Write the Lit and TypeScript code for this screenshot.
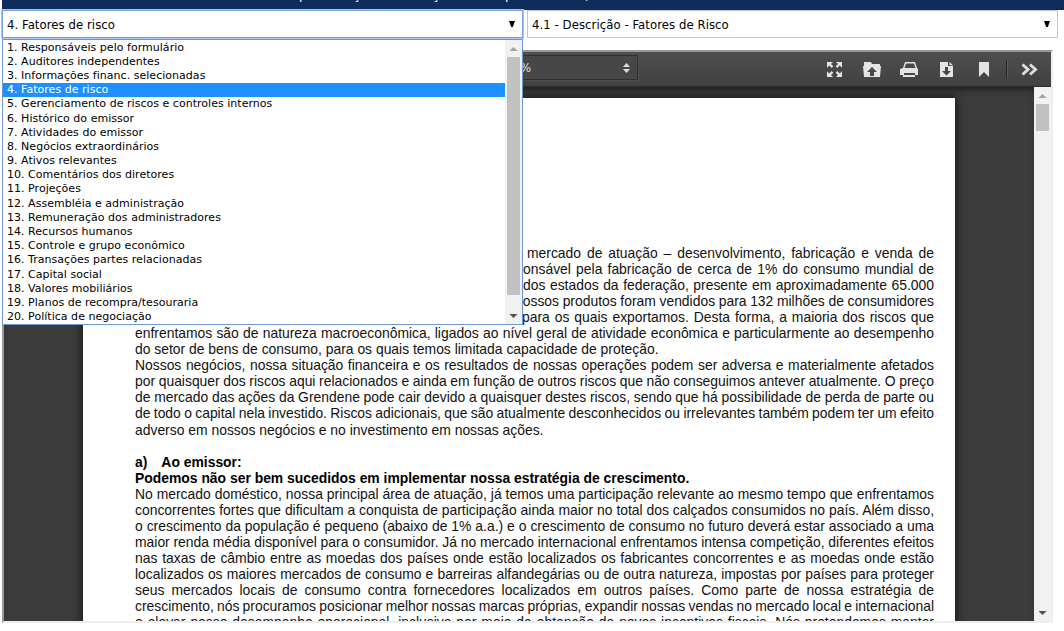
import { LitElement, html, css } from "lit";
import { customElement } from "lit/decorators.js";

const OPTIONS = [
  "1. Responsáveis pelo formulário", "2. Auditores independentes", "3. Informações financ. selecionadas",
  "4. Fatores de risco", "5. Gerenciamento de riscos e controles internos", "6. Histórico do emissor",
  "7. Atividades do emissor", "8. Negócios extraordinários", "9. Ativos relevantes",
  "10. Comentários dos diretores", "11. Projeções", "12. Assembléia e administração",
  "13. Remuneração dos administradores", "14. Recursos humanos", "15. Controle e grupo econômico",
  "16. Transações partes relacionadas", "17. Capital social", "18. Valores mobiliários",
  "19. Planos de recompra/tesouraria", "20. Política de negociação",
];

type Line = { t: string; indent?: number; kind?: string };
const LINES: Line[] = [
  { t: "mercado de atuação – desenvolvimento, fabricação e venda de", indent: 392 },
  { t: "responsável pela fabricação de cerca de 1% do consumo mundial de", indent: 361 },
  { t: "dos estados da federação, presente em aproximadamente 65.000", indent: 388 },
  { t: "nossos produtos foram vendidos para 132 milhões de consumidores", indent: 380 },
  { t: "para os quais exportamos. Desta forma, a maioria dos riscos que", indent: 387 },
  { t: "enfrentamos são de natureza macroeconômica, ligados ao nível geral de atividade econômica e particularmente ao desempenho" },
  { t: "do setor de bens de consumo, para os quais temos limitada capacidade de proteção.", kind: "last" },
  { t: "Nossos negócios, nossa situação financeira e os resultados de nossas operações podem ser adversa e materialmente afetados" },
  { t: "por quaisquer dos riscos aqui relacionados e ainda em função de outros riscos que não conseguimos antever atualmente. O preço" },
  { t: "de mercado das ações da Grendene pode cair devido a quaisquer destes riscos, sendo que há possibilidade de perda de parte ou" },
  { t: "de todo o capital nela investido. Riscos adicionais, que são atualmente desconhecidos ou irrelevantes também podem ter um efeito" },
  { t: "adverso em nossos negócios e no investimento em nossas ações.", kind: "last" },
  { t: "", kind: "last" },
  { t: "Ao emissor:", kind: "head" },
  { t: "Podemos não ser bem sucedidos em implementar nossa estratégia de crescimento.", kind: "last bold" },
  { t: "No mercado doméstico, nossa principal área de atuação, já temos uma participação relevante ao mesmo tempo que enfrentamos" },
  { t: "concorrentes fortes que dificultam a conquista de participação ainda maior no total dos calçados consumidos no país. Além disso," },
  { t: "o crescimento da população é pequeno (abaixo de 1% a.a.) e o crescimento de consumo no futuro deverá estar associado a uma" },
  { t: "maior renda média disponível para o consumidor. Já no mercado internacional enfrentamos intensa competição, diferentes efeitos" },
  { t: "nas taxas de câmbio entre as moedas dos países onde estão localizados os fabricantes concorrentes e as moedas onde estão" },
  { t: "localizados os maiores mercados de consumo e barreiras alfandegárias ou de outra natureza, impostas por países para proteger" },
  { t: "seus mercados locais de consumo contra fornecedores localizados em outros países. Como parte de nossa estratégia de" },
  { t: "crescimento, nós procuramos posicionar melhor nossas marcas próprias, expandir nossas vendas no mercado local e internacional" },
  { t: "e elevar nosso desempenho operacional, inclusive por meio da obtenção de novos incentivos fiscais. Nós pretendemos manter" },
];

const TEXT_WIDTH = 799;

@customElement("app-root")
export class AppRoot extends LitElement {
  static styles = css`
    * { box-sizing: border-box; }
    :host { display: block; position: relative; width: 1064px; height: 631px; overflow: hidden; background: #fff; color: #000; font-family: "DejaVu Sans", sans-serif; }
    .banner { height: 10px; margin-left: 2px; background: #0e2c5c; overflow: hidden; color: #fff; font: 14px/16px "DejaVu Sans Condensed", "DejaVu Sans", sans-serif; }
    .title { display: grid; grid-template-columns: 54px 79px 73px 80px 20px; margin: -14px 0 0 297px; height: 16px; }
    .selects { display: flex; gap: 4px; margin-left: 2px; height: 28px; }
    .select { display: flex; align-items: center; justify-content: space-between; height: 28px; border: 1px solid #c6c6c6; background: #fff; padding: 0 7px 0 4px; font: 13px "DejaVu Sans Condensed", "DejaVu Sans", sans-serif; letter-spacing: 0.06px; white-space: pre; }
    .select.first { width: 521px; border-color: #7a9fe0; box-shadow: 0 0 0 1px #a9c5f7; }
    .select.second { width: 531px; }
    .select svg { display: block; }
    .viewer { margin: 12px 0 0 2px; width: 1051px; height: 573px; border: 2px solid #eee; border-top-color: #999; border-left-color: #999; display: flex; flex-direction: column; background: #3c3c3c; overflow: hidden; }
    .toolbar { flex: none; height: 35px; background: linear-gradient(#4e4e4e, #414141); border-bottom: 1px solid #2c2c2c; display: flex; align-items: center; justify-content: space-between; }
    .zoom { width: 181px; height: 25px; margin: -3px 0 0 453px; background: #474747; border: 1px solid #303030; box-shadow: 0 0 0 1px #4e4e4e; display: flex; align-items: center; justify-content: space-between; padding: 0 7px 0 62px; color: #e2e2e2; font: 13px "DejaVu Sans Condensed", sans-serif; }
    .tools { display: block; width: 230px; height: 34px; margin-right: 1px; }
    .content { flex: 1; display: flex; min-height: 0; }
    .canvas { flex: 1; padding: 11px 0 0 79px; overflow: hidden; box-shadow: inset 0 5px 8px -4px #151515; }
    .page { width: 872px; height: 560px; background: #fff; box-shadow: 0 0 9px 1px #161616; padding: 147px 21px 0 52px; color: #111; font: 13.9px/16.05px "Liberation Sans", sans-serif; }
    .line { height: 16.05px; white-space: nowrap; }
    .bold, .head { font-weight: bold; color: #000; }
    .head { display: flex; gap: 14px; }
    .sb { flex: none; width: 17px; background: #f1f1f1; display: flex; flex-direction: column; align-items: center; justify-content: space-between; }
    .sb svg { display: block; flex: none; }
    .track { flex: 1; }
    .thumb { width: 13px; background: #c1c1c1; }
    .short { height: 27px; }
    .long { height: 238px; }
    .list { position: absolute; left: 2px; top: 39px; width: 521px; height: 286px; border: 1px solid #7096d2; background: #fff; display: flex; }
    .items { flex: 1; overflow: hidden; font: 11px/14.2px "DejaVu Sans", sans-serif; letter-spacing: 0.03px; padding-top: 0.6px; }
    .item { height: 14.2px; padding-left: 4px; white-space: pre; }
    .item.on { background: #1e90ff; color: #fff; }
  `;

  firstUpdated() {
    this.renderRoot.querySelectorAll<HTMLElement>(".fit").forEach((el) => {
      const span = el.firstElementChild as HTMLElement;
      const target = TEXT_WIDTH - Number(el.dataset.indent);
      const gaps = (span.textContent ?? "").split(" ").length - 1;
      const delta = target - span.getBoundingClientRect().width;
      span.style.wordSpacing = `${delta / gaps}px`;
    });
  }

  private arrow(up: boolean) {
    return html`<svg width="17" height="17" viewBox="0 0 17 17"><path d=${up ? "M4.5 11h8l-4-4z" : "M4.5 7h8l-4 4z"} fill=${up ? "#a0a0a0" : "#505050"} /></svg>`;
  }
  private caret() {
    return html`<svg width="6" height="6" viewBox="0 0 6 6"><path d="M0 0h6L3.800 6h-1.600z" fill="#000" /></svg>`;
  }
  private tools() {
    return html`<svg class="tools" viewBox="820 52 230 34">
      <g fill="#e4e4e4">
        <path d="M827 62h6l-2 2 2.300 2.300-1.600 1.600-2.400-2.400-2.300 2.200zM842 62h-6l2 2-2.300 2.300 1.600 1.600 2.400-2.400 2.300 2.200zM827 77h6l-2-2 2.300-2.300-1.600-1.600-2.400 2.400-2.300-2.200zM842 77h-6l2-2-2.300-2.300 1.600-1.600 2.400 2.400 2.300-2.200z" />
        <path d="M864 62h7l1 2h8v2h-16z" />
        <path fill-rule="evenodd" d="M863 66h18l-1 11h-16zM872 67l-5 5h3v4h4v-4h3z" />
        <path fill-rule="evenodd" d="M903 68l2-6h10l2 6 1 1v6h-3v2h-12v-2h-3v-6zM906 63.500l-1.500 4.500h11l-1.500-4.500zM904 73v2h11v-2z" />
        <path fill-rule="evenodd" d="M940 62h8v4h5v11h-13zM945 67v4h-3l4.500 4.500 4.500-4.500h-3v-4z" />
        <path d="M949.500 62l3.500 3.200h-3.500z" />
        <path d="M979 62h10v15l-5-5-5 5z" />
      </g>
      <path d="M1006.500 60v18" stroke="#222" /><path d="M1007.500 60v18" stroke="#5c5c5c" />
      <path d="M1022.500 64.500l5.500 5-5.500 5M1030 64.500l5.500 5-5.500 5" fill="none" stroke="#ddd" stroke-width="3" />
    </svg>`;
  }

  private line(l: Line) {
    if (l.kind === "head") return html`<div class="line head"><span>a)</span><span>${l.t}</span></div>`;
    if (l.kind) return html`<div class="line ${l.kind}">${l.t}</div>`;
    const indent = l.indent ?? 0;
    return html`<div class="line fit" data-indent=${indent} style="margin-left:${indent}px"><span>${l.t}</span></div>`;
  }

  render() {
    return html`
      <div class="banner"><div class="title"><span>p</span><span>ç</span><span>ç</span><span>p</span><span>,</span></div></div>
      <div class="selects">
        <div class="select first"><span>4. Fatores de risco</span>${this.caret()}</div>
        <div class="select second"><span>4.1 - Descrição - Fatores de Risco</span>${this.caret()}</div>
      </div>
      <div class="viewer">
        <div class="toolbar">
          <div class="zoom"><span>%</span><svg width="7" height="10" viewBox="0 0 7 10"><path d="M0 4h7L3.500 0zM0 6h7L3.500 10z" fill="#ddd" /></svg></div>
          ${this.tools()}
        </div>
        <div class="content">
          <div class="canvas"><div class="page">${LINES.map((l) => this.line(l))}</div></div>
          <div class="sb">${this.arrow(true)}<div class="track"><div class="thumb short"></div></div>${this.arrow(false)}</div>
        </div>
      </div>
      <div class="list">
        <div class="items">${OPTIONS.map((o, i) => html`<div class="item ${i === 3 ? "on" : ""}">${o}</div>`)}</div>
        <div class="sb">${this.arrow(true)}<div class="track"><div class="thumb long"></div></div>${this.arrow(false)}</div>
      </div>`;
  }
}
